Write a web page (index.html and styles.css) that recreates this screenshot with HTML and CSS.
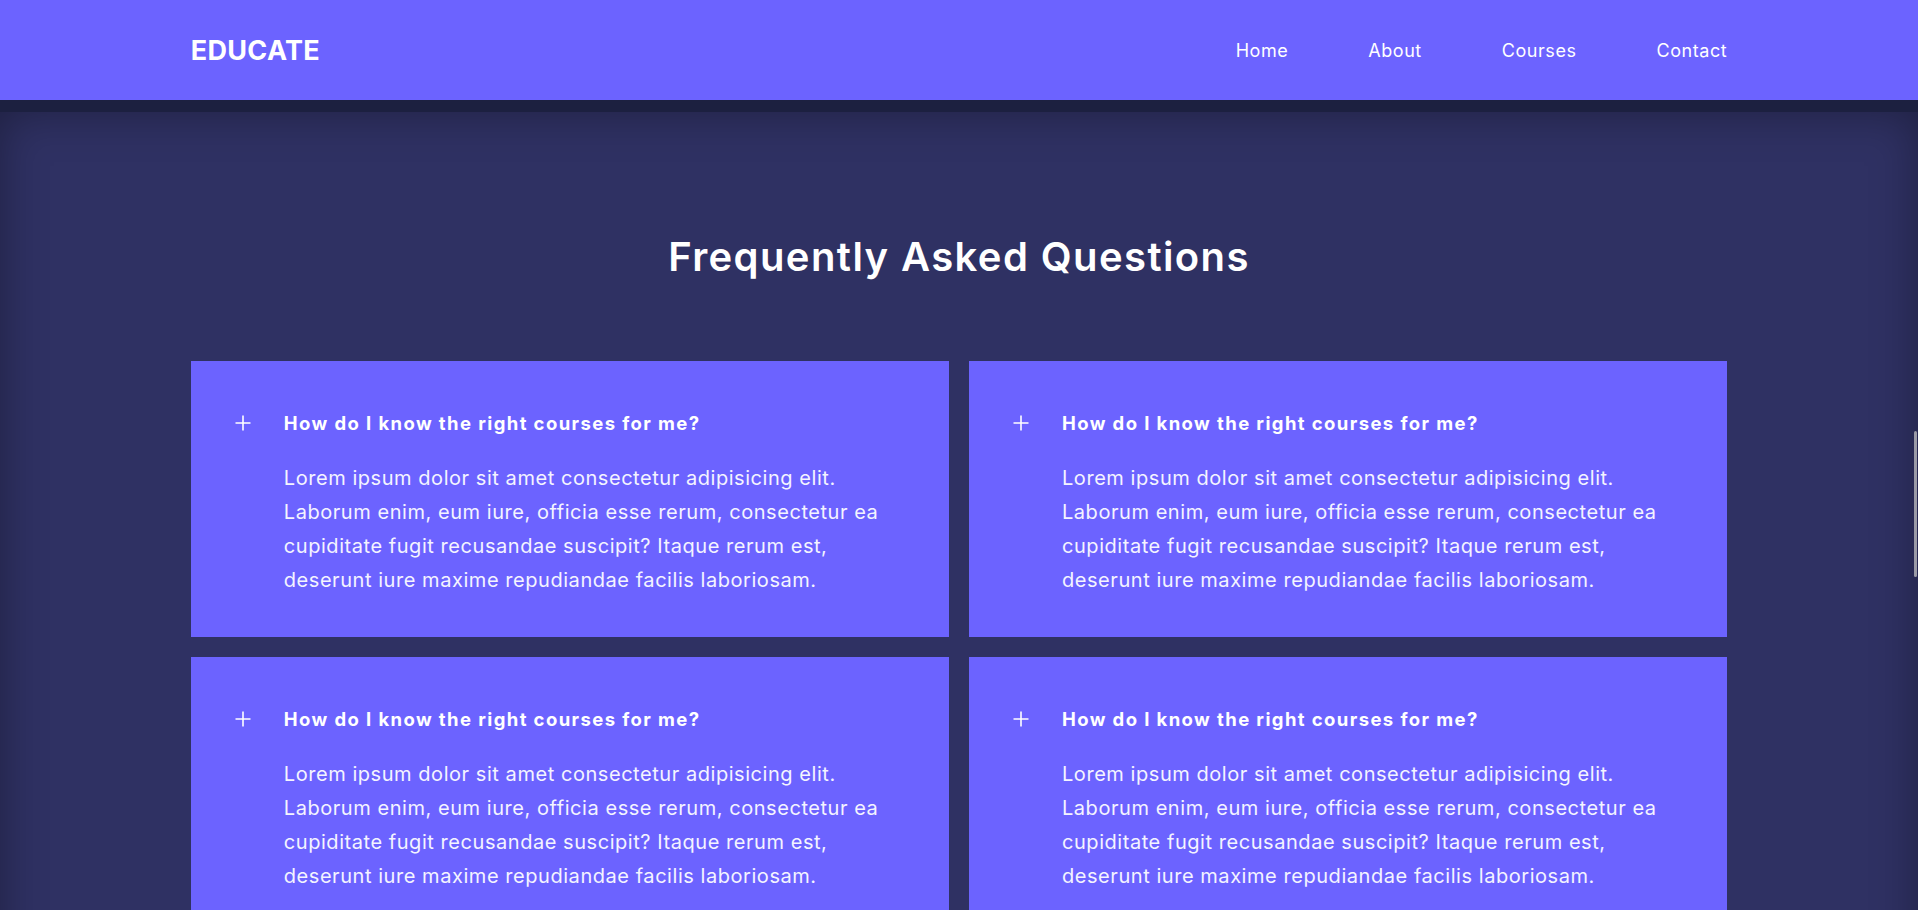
FILE: index.html
```html
<!DOCTYPE html>
<html lang="en">
<head>
<meta charset="utf-8">
<title>Educate – FAQ</title>
<link rel="stylesheet" href="styles.css">
</head>
<body>
<header class="site-header">
  <div class="container header-inner">
    <a class="logo" href="#">EDUCATE</a>
    <nav class="nav">
      <a href="#">Home</a>
      <a href="#">About</a>
      <a href="#">Courses</a>
      <a href="#">Contact</a>
    </nav>
  </div>
</header>

<main class="faq">
  <div class="container">
    <h2 class="faq-title">Frequently Asked Questions</h2>
    <div class="faq-grid">
      <div class="faq-card">
        <div class="faq-q">
          <svg class="plus" viewBox="0 0 16 16" width="16" height="16"><path d="M8 0.5V15.5M0.5 8H15.5" stroke="#fff" stroke-width="1.6" fill="none"/></svg>
          <h3>How do I know the right courses for me?</h3>
        </div>
        <p class="faq-a">Lorem ipsum dolor sit amet consectetur adipisicing elit. Laborum enim, eum iure, officia esse rerum, consectetur ea cupiditate fugit recusandae suscipit? Itaque rerum est, deserunt iure maxime repudiandae facilis laboriosam.</p>
      </div>
      <div class="faq-card">
        <div class="faq-q">
          <svg class="plus" viewBox="0 0 16 16" width="16" height="16"><path d="M8 0.5V15.5M0.5 8H15.5" stroke="#fff" stroke-width="1.6" fill="none"/></svg>
          <h3>How do I know the right courses for me?</h3>
        </div>
        <p class="faq-a">Lorem ipsum dolor sit amet consectetur adipisicing elit. Laborum enim, eum iure, officia esse rerum, consectetur ea cupiditate fugit recusandae suscipit? Itaque rerum est, deserunt iure maxime repudiandae facilis laboriosam.</p>
      </div>
      <div class="faq-card">
        <div class="faq-q">
          <svg class="plus" viewBox="0 0 16 16" width="16" height="16"><path d="M8 0.5V15.5M0.5 8H15.5" stroke="#fff" stroke-width="1.6" fill="none"/></svg>
          <h3>How do I know the right courses for me?</h3>
        </div>
        <p class="faq-a">Lorem ipsum dolor sit amet consectetur adipisicing elit. Laborum enim, eum iure, officia esse rerum, consectetur ea cupiditate fugit recusandae suscipit? Itaque rerum est, deserunt iure maxime repudiandae facilis laboriosam.</p>
      </div>
      <div class="faq-card">
        <div class="faq-q">
          <svg class="plus" viewBox="0 0 16 16" width="16" height="16"><path d="M8 0.5V15.5M0.5 8H15.5" stroke="#fff" stroke-width="1.6" fill="none"/></svg>
          <h3>How do I know the right courses for me?</h3>
        </div>
        <p class="faq-a">Lorem ipsum dolor sit amet consectetur adipisicing elit. Laborum enim, eum iure, officia esse rerum, consectetur ea cupiditate fugit recusandae suscipit? Itaque rerum est, deserunt iure maxime repudiandae facilis laboriosam.</p>
      </div>
    </div>
  </div>
</main>

<div class="scroll-thumb"></div>
</body>
</html>
```

FILE: styles.css
```css
* { box-sizing: border-box; }

html { overflow: hidden; }

body {
  margin: 0;
  background: #1c2040;
  font-family: "Inter", "Open Sans", "DejaVu Sans", sans-serif;
  color: #fff;
}

.container {
  width: calc(80% + 2px);
  margin: 0 auto;
}

.site-header {
  background: #6c63ff;
  height: 100px;
}

.header-inner {
  height: 100%;
  display: flex;
  align-items: center;
  justify-content: space-between;
}

.logo {
  color: #fff;
  text-decoration: none;
  font-weight: 700;
  font-size: 27px;
  letter-spacing: 0.3px;
}

.nav {
  display: flex;
  gap: 80px;
}

.nav a {
  color: #fff;
  text-decoration: none;
  font-size: 18px;
  font-weight: 400;
  letter-spacing: 0.55px;
}

.faq {
  margin-top: 12px;
  background: #2f3163;
  box-shadow: inset 0 0 45px rgba(0, 0, 0, 0.35);
  padding: 121px 0 120px;
  min-height: 900px;
}

.faq-title {
  margin: 0 0 80px;
  text-align: center;
  font-size: 40px;
  line-height: 48px;
  font-weight: 600;
  letter-spacing: 1.4px;
}

.faq-grid {
  display: grid;
  grid-template-columns: 1fr 1fr;
  gap: 20px;
}

.faq-card {
  background: #6c63ff;
  padding: 48px 44px 40px;
}

.faq-q {
  display: flex;
  align-items: center;
  gap: 33px;
}

.plus {
  flex: none;
  display: block;
}

.faq-q h3 {
  margin: 0;
  font-size: 18.5px;
  line-height: 28px;
  font-weight: 700;
  letter-spacing: 1.4px;
}

.faq-a {
  margin: 24px 0 0 49px;
  font-size: 20px;
  line-height: 34px;
  font-weight: 400;
  letter-spacing: 0.55px;
  color: #f4f4ff;
}

.scroll-thumb {
  position: fixed;
  right: 1px;
  top: 431px;
  width: 3px;
  height: 146px;
  border-radius: 2px;
  background: #9a9aa6;
}
```
